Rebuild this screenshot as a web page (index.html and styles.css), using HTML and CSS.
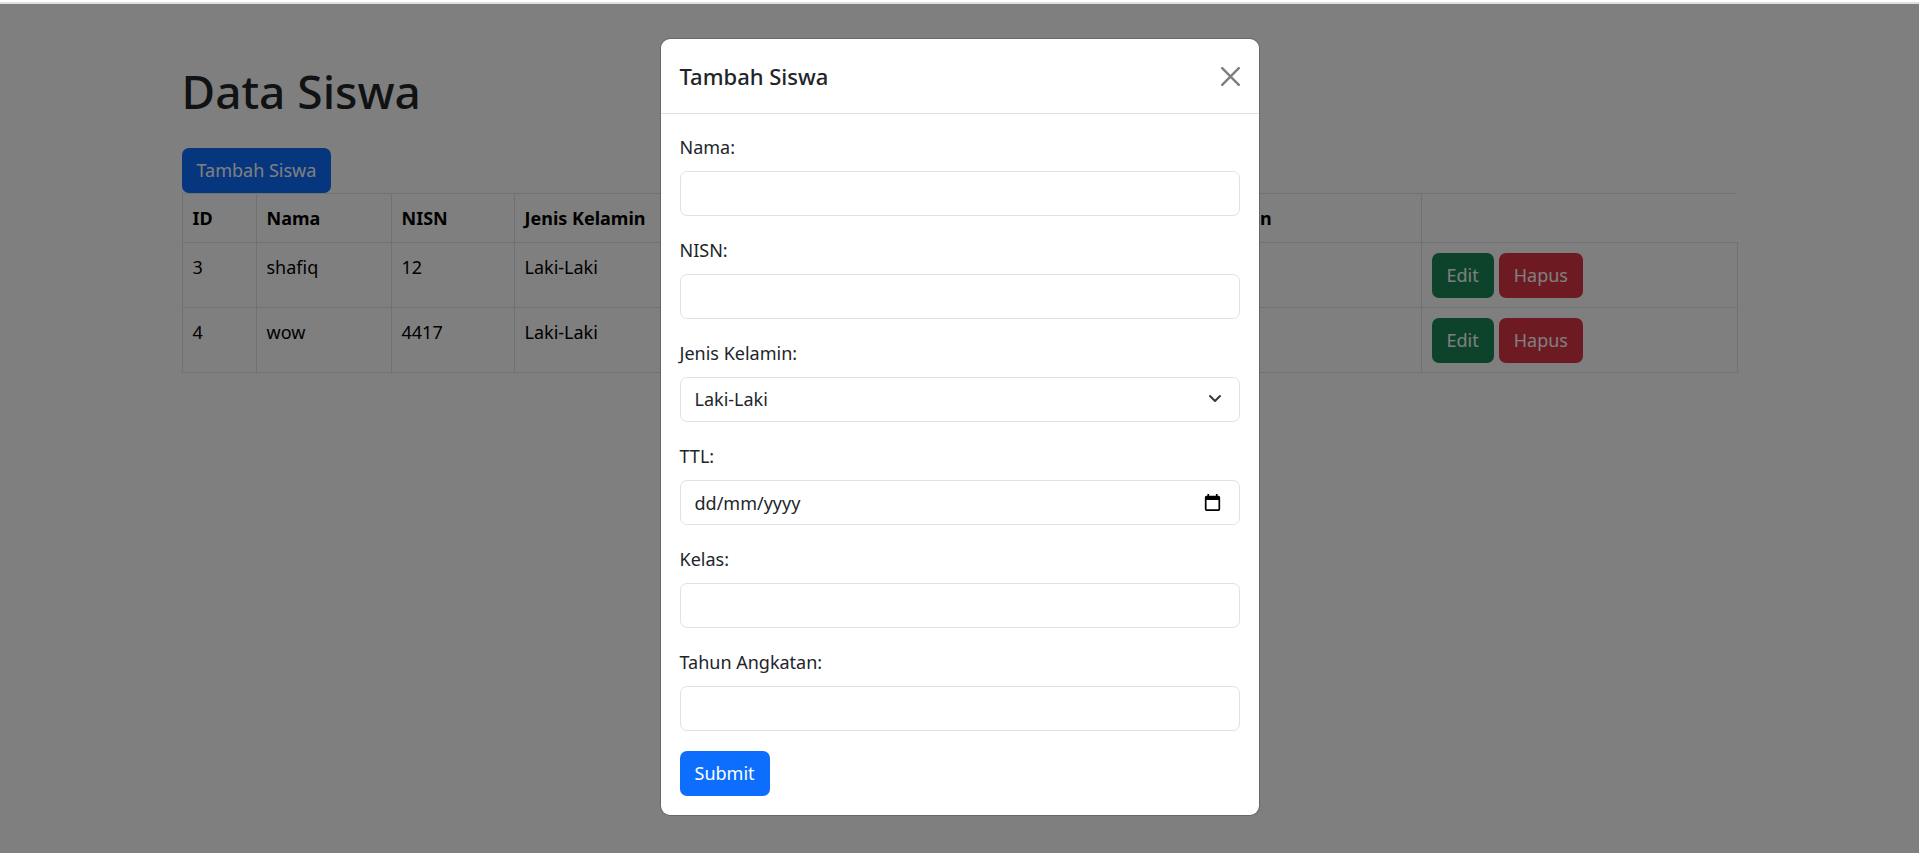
FILE: index.html
```html
<!DOCTYPE html>
<html lang="id">
<head>
<meta charset="utf-8">
<meta name="viewport" content="width=device-width, initial-scale=1">
<title>Data Siswa</title>
<link rel="stylesheet" href="styles.css">
</head>
<body>
<div class="top-strip"></div>
<div class="page">
  <main class="container">
    <h1 class="page-title">Data Siswa</h1>
    <button type="button" class="btn btn-primary">Tambah Siswa</button>
    <table class="table">
      <colgroup>
        <col class="col-id"><col class="col-nama"><col class="col-nisn"><col class="col-jk">
        <col><col><col class="col-tahun"><col class="col-aksi">
      </colgroup>
      <thead>
        <tr><th>ID</th><th>Nama</th><th>NISN</th><th>Jenis Kelamin</th><th>TTL</th><th>Kelas</th><th>Tahun Angkatan</th></tr>
      </thead>
      <tbody>
        <tr>
          <td>3</td><td>shafiq</td><td>12</td><td>Laki-Laki</td><td></td><td></td><td></td>
          <td><div class="actions"><button type="button" class="btn btn-success">Edit</button><button type="button" class="btn btn-danger">Hapus</button></div></td>
        </tr>
        <tr>
          <td>4</td><td>wow</td><td>4417</td><td>Laki-Laki</td><td></td><td></td><td></td>
          <td><div class="actions"><button type="button" class="btn btn-success">Edit</button><button type="button" class="btn btn-danger">Hapus</button></div></td>
        </tr>
      </tbody>
    </table>
  </main>

  <div class="overlay">
    <div class="modal" role="dialog" aria-modal="true" aria-labelledby="modal-title">
      <div class="modal-header">
        <h2 class="modal-title" id="modal-title">Tambah Siswa</h2>
        <button type="button" class="btn-close" aria-label="Close">
          <svg viewBox="0 0 16 16" aria-hidden="true"><path d="M.293.293a1 1 0 0 1 1.414 0L8 6.586 14.293.293a1 1 0 1 1 1.414 1.414L9.414 8l6.293 6.293a1 1 0 0 1-1.414 1.414L8 9.414l-6.293 6.293a1 1 0 0 1-1.414-1.414L6.586 8 .293 1.707a1 1 0 0 1 0-1.414z"/></svg>
        </button>
      </div>
      <form class="modal-body">
        <div class="field">
          <label for="nama">Nama:</label>
          <input class="control" type="text" id="nama">
        </div>
        <div class="field">
          <label for="nisn">NISN:</label>
          <input class="control" type="text" id="nisn">
        </div>
        <div class="field">
          <label for="jk">Jenis Kelamin:</label>
          <div class="control-wrap">
            <select class="control" id="jk"><option>Laki-Laki</option><option>Perempuan</option></select>
            <svg class="chevron" viewBox="0 0 14 14" aria-hidden="true"><path d="m2 4 5 5 5-5"/></svg>
          </div>
        </div>
        <div class="field">
          <label for="ttl">TTL:</label>
          <div class="control-wrap">
            <input class="control" type="text" id="ttl" placeholder="dd/mm/yyyy" inputmode="numeric">
            <button type="button" class="picker" aria-label="Pilih tanggal">
              <svg viewBox="0 0 20 20" aria-hidden="true"><path d="M17 2h-1V0h-2v2H6V0H4v2H3a2 2 0 0 0-2 2v14a2 2 0 0 0 2 2h14a2 2 0 0 0 2-2V4a2 2 0 0 0-2-2zm0 16H3V7h14z"/></svg>
            </button>
          </div>
        </div>
        <div class="field">
          <label for="kelas">Kelas:</label>
          <input class="control" type="text" id="kelas">
        </div>
        <div class="field">
          <label for="tahun">Tahun Angkatan:</label>
          <input class="control" type="text" id="tahun">
        </div>
        <button type="submit" class="btn btn-primary">Submit</button>
      </form>
    </div>
  </div>
</div>
</body>
</html>
```
FILE: styles.css
```css
*, *::before, *::after { box-sizing: border-box; }

body {
  margin: 0;
  min-height: 100vh;
  display: flex;
  flex-direction: column;
  background: #fff;
  color: #212529;
  font-family: "Segoe UI", "Noto Sans", sans-serif;
  font-size: 18px;
  line-height: 29px;
}

.top-strip {
  height: 4px;
  background: #fff;
  border-bottom: 2px solid #dfdfdf;
}

.page {
  position: relative;
  flex: 1;
}

.container {
  max-width: 1584px;
  margin: 0 auto;
  padding: 58px 14px;
}

.page-title {
  margin: 0 0 28px;
  font-size: 46px;
  font-weight: 500;
  line-height: 58px;
}

.btn {
  display: block;
  padding: 7px 14px;
  border: 1px solid transparent;
  border-radius: 7px;
  color: #fff;
  font: inherit;
}

.btn-primary { background: #0d6efd; }
.btn-success { background: #198754; }
.btn-danger { background: #dc3545; }

.table {
  width: 100%;
  table-layout: fixed;
  border-collapse: collapse;
  color: #000;
}

.table tr { border: 0 solid #dee2e6; border-width: 1px 0; }

.table th,
.table td {
  padding: 10px 10px 9px;
  border: 1px solid #dee2e6;
  text-align: left;
  vertical-align: top;
}

.col-id { width: 74px; }
.col-nama { width: 135px; }
.col-nisn { width: 123px; }
.col-jk { width: 154px; }
.col-tahun { width: 307px; }
.col-aksi { width: 316px; }

.actions {
  display: flex;
  gap: 5px;
}

.overlay {
  position: absolute;
  inset: 0;
  padding: 34px 16px;
  background: rgba(0, 0, 0, 0.5);
}

.modal {
  max-width: 600px;
  margin: 0 auto;
  background: #fff;
  background-clip: padding-box;
  border: 1px solid rgba(0, 0, 0, 0.175);
  border-radius: 10px;
}

.modal-header {
  display: flex;
  align-items: center;
  justify-content: space-between;
  padding: 19px;
  border-bottom: 1px solid #dee2e6;
}

.modal-title {
  margin: 0;
  font-size: 22px;
  font-weight: 500;
  line-height: 36px;
}

.btn-close {
  display: block;
  padding: 0;
  border: 0;
  background: none;
  opacity: 0.5;
}

.btn-close svg {
  display: block;
  width: 19px;
  height: 19px;
}

.modal-body { padding: 19px; }

.field { margin-bottom: 20px; }

.field label {
  display: block;
  margin-bottom: 9px;
}

.control {
  display: block;
  width: 100%;
  height: 45px;
  padding: 7px 14px;
  border: 1px solid #dee2e6;
  border-radius: 7px;
  background: #fff;
  color: #212529;
  font: inherit;
  appearance: none;
}

.control::placeholder {
  color: #212529;
  opacity: 1;
}

.control-wrap { position: relative; }

.chevron {
  position: absolute;
  top: 15px;
  right: 18px;
  width: 14px;
  height: 14px;
  fill: none;
  stroke: #343a40;
  stroke-width: 2;
  stroke-linecap: round;
  stroke-linejoin: round;
  pointer-events: none;
}

.picker {
  position: absolute;
  top: 14px;
  right: 19px;
  padding: 0;
  border: 0;
  background: none;
}

.picker svg {
  display: block;
  width: 17px;
  height: 17px;
}
```
